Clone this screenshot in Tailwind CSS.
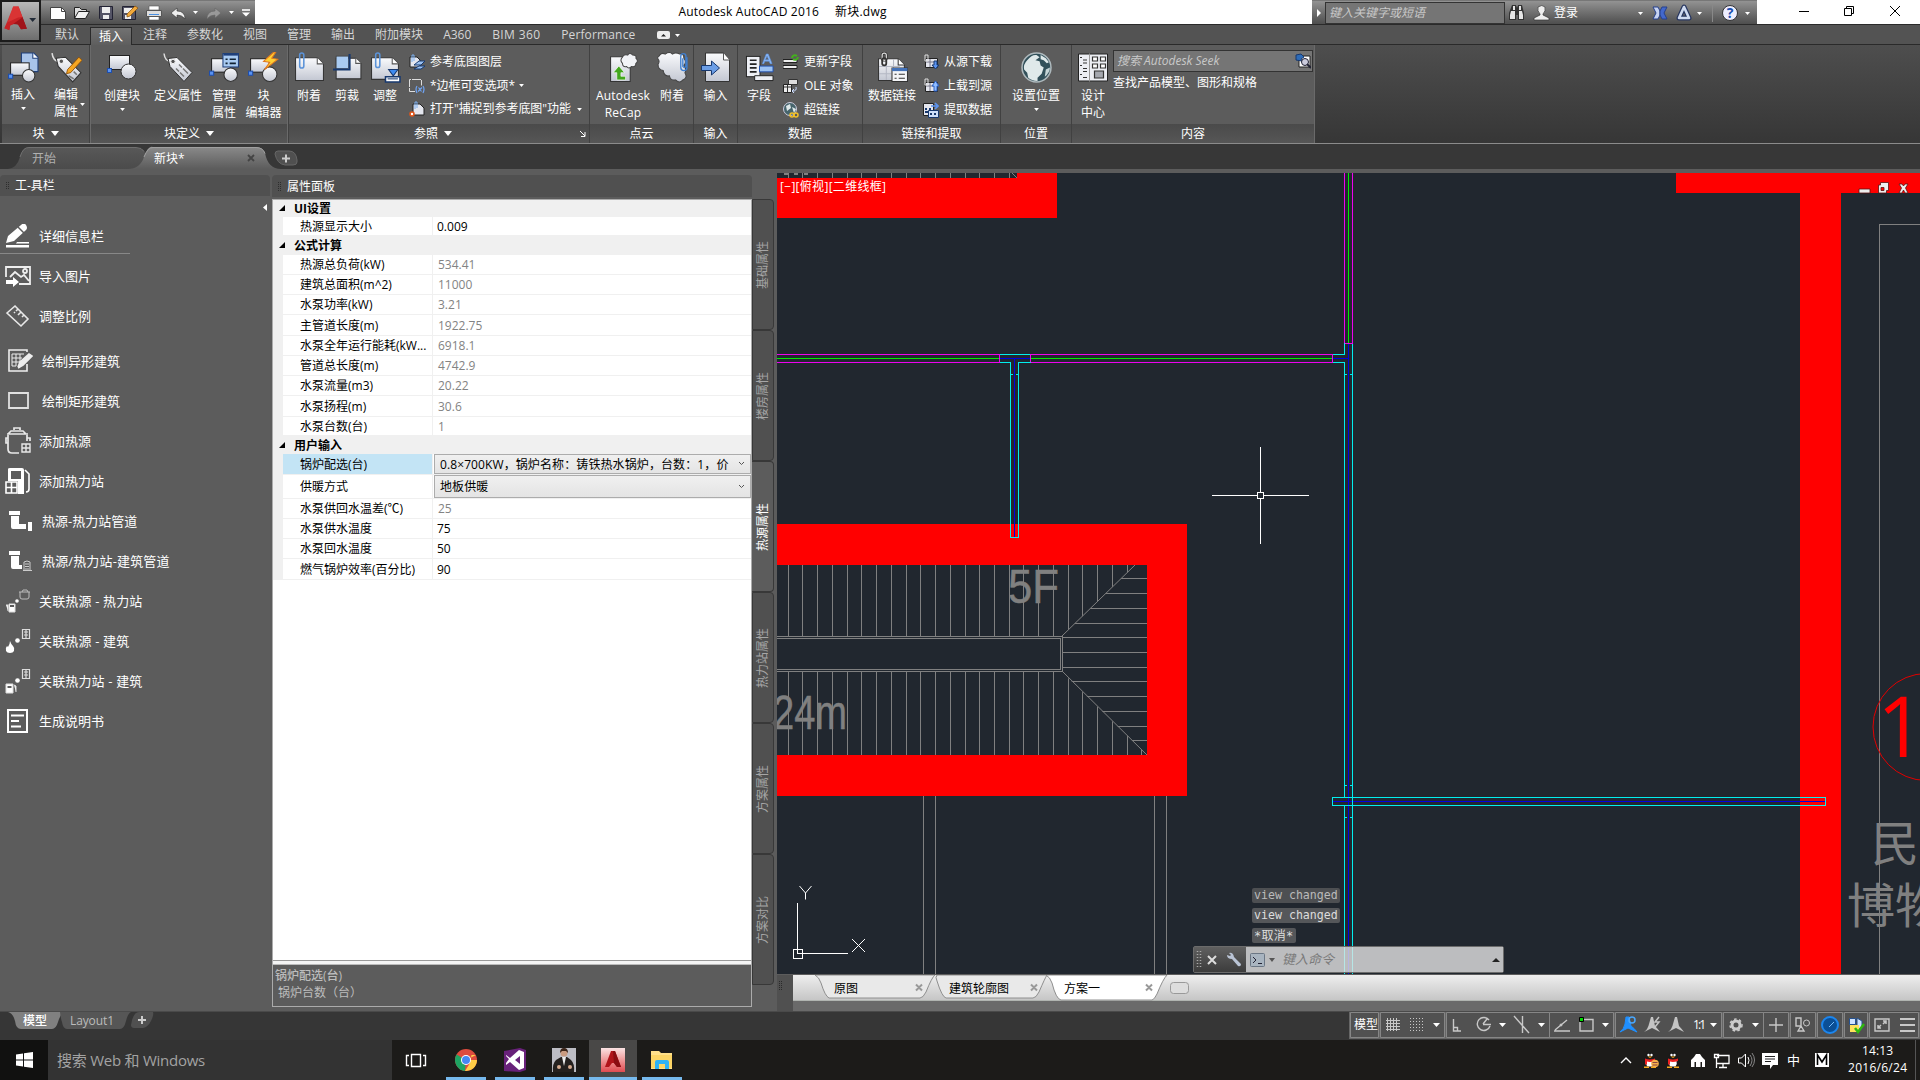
<!DOCTYPE html>
<html lang="zh-CN">
<head>
<meta charset="utf-8">
<title>Autodesk AutoCAD 2016</title>
<script src="https://cdn.jsdelivr.net/npm/@tailwindcss/browser@4"></script>
</head>
<body class="w-[1920px] h-[1080px] overflow-hidden bg-[#5c5c5c] font-['Open_Sans','Noto_Sans_CJK_SC',sans-serif] text-[12px] leading-none text-white flex flex-col whitespace-nowrap">
<svg class="absolute w-0 h-0">
 <defs>
  <linearGradient id="pg" x1="0" y1="0" x2="0" y2="1"><stop offset="0" stop-color="#fafbfd"/><stop offset="1" stop-color="#c3c7d2"/></linearGradient>
  <linearGradient id="red" x1="0" y1="0" x2="1" y2="1"><stop offset="0" stop-color="#f04a4a"/><stop offset="1" stop-color="#8e0c10"/></linearGradient>
 </defs>
 <symbol id="insert" viewBox="0 0 30 30"><path d="M13 1h12l4 4v14h-16z" fill="#a9c4ea" stroke="#1f3f7a"/><path d="M24 1v5h5" fill="#fff" stroke="#1f3f7a"/><rect x="2.500" y="10.500" width="18" height="12" fill="url(#pg)" stroke="#222"/><circle cx="20" cy="23" r="6" fill="url(#pg)" stroke="#333"/><rect x=".5" y="21.500" width="4" height="4" fill="#5b93f0" stroke="#1e4fae"/></symbol>
 <symbol id="create" viewBox="0 0 30 30"><rect x="2.500" y="3.500" width="20" height="14" fill="url(#pg)" stroke="#222"/><circle cx="21.500" cy="19.500" r="7.500" fill="url(#pg)" stroke="#333"/><rect x=".5" y="16.500" width="4" height="4" fill="#5b93f0" stroke="#1e4fae"/></symbol>
 <symbol id="tag" viewBox="0 0 30 30"><path d="M1 1q1 8 7 8" fill="none" stroke="#ddd" stroke-width="1.500"/><path d="M5 6l9-1 15 15-8 9L7 14z" fill="url(#pg)" stroke="#333"/><circle cx="10" cy="9" r="2.200" fill="#555" stroke="#eee"/><path d="M13 16l3 3M17 20l4 4M16 12l3 3M20 16l5 5" stroke="#777" stroke-width="1.500"/></symbol>
 <symbol id="tagedit" viewBox="0 0 30 30"><path d="M1 1q1 8 7 8" fill="none" stroke="#ddd" stroke-width="1.500"/><path d="M5 6l9-1 15 15-8 9L7 14z" fill="url(#pg)" stroke="#333"/><circle cx="10" cy="9" r="2.200" fill="#555" stroke="#eee"/><path d="M17 23l5 3M22 19l3 3" stroke="#777" stroke-width="1.500"/><path d="M27 5l3 3-11 12-4 1 1-4z" fill="#f5a623" stroke="#8a4a00" stroke-width=".8"/></symbol>
 <symbol id="manage" viewBox="0 0 30 30"><rect x="2.500" y="6.500" width="18" height="13" fill="url(#pg)" stroke="#222"/><circle cx="21" cy="22" r="6.500" fill="url(#pg)" stroke="#333"/><rect x=".5" y="18.500" width="4" height="4" fill="#5b93f0" stroke="#1e4fae"/><rect x="13.500" y="1.500" width="15" height="13" fill="#a9cbf2" stroke="#1f3f7a"/><path d="M14 2.500h14" stroke="#1f3f7a" stroke-width="2"/><path d="M16 7h2M16 11h2M20 7h6M20 11h6" stroke="#123" stroke-width="1.500"/></symbol>
 <symbol id="bedit" viewBox="0 0 30 30"><rect x="2.500" y="6.500" width="18" height="13" fill="url(#pg)" stroke="#222"/><circle cx="21" cy="21.500" r="7" fill="url(#pg)" stroke="#333"/><rect x=".5" y="18.500" width="4" height="4" fill="#5b93f0" stroke="#1e4fae"/><path d="M25 0L15 9l6 1-5 7 13-10-6-1 4-6z" fill="#ffcf33" stroke="#e0781e"/></symbol>
 <symbol id="attach" viewBox="0 0 30 30"><path d="M1.500 5.500h21l6 6v16h-27z" fill="url(#pg)" stroke="#333"/><path d="M22.500 5.500v6h6" fill="#fff" stroke="#555"/><path d="M9.500 5v8.500a2 2 0 01-4 0V3a2 2 0 014 0v2" fill="none" stroke="#5b93d8" stroke-width="1.500"/></symbol>
 <symbol id="clip" viewBox="0 0 30 30"><path d="M4 6h19l5 5v15H4z" fill="url(#pg)" stroke="#333"/><path d="M23 6v5h5" fill="#fff" stroke="#555"/><rect x="4" y="4" width="12" height="12" fill="#a9cbf2" stroke="#333" stroke-width=".6"/><path d="M17 2v15H1" fill="none" stroke="#17386e" stroke-width="2"/></symbol>
 <symbol id="adjust" viewBox="0 0 30 30"><path d="M1.500 5.500h20l6 6v15h-26z" fill="url(#pg)" stroke="#333"/><path d="M21.500 5.500v6h6" fill="#fff" stroke="#555"/><path d="M9.500 5v8a2 2 0 01-4 0V3a2 2 0 014 0v2" fill="none" stroke="#5b93d8" stroke-width="1.500"/><path d="M15 24v5h14v-5z" fill="#fff" stroke="#17386e" stroke-width="1.500"/><path d="M18 17h9l-4.500 6z" fill="#3d8bf2" stroke="#17386e"/><path d="M17 26h10" stroke="#17386e"/></symbol>
 <symbol id="recap" viewBox="0 0 30 30"><path d="M2.500 4.500h19v24h-19z" fill="url(#pg)" stroke="#333"/><path d="M14 5q1-3 5-2 2-3 5 0 4 0 3 3 3 3 0 5 0 4-4 3-3 3-5 0-4 1-4-3-3-3 0-6z" fill="#f2f3f7" stroke="#444"/><path d="M17 27H8.500v-7H5l5.500-6.500L16 20h-3.500v3.500H17z" fill="#43a71d" stroke="#fff" stroke-width=".6"/></symbol>
 <symbol id="cloud" viewBox="0 0 30 30"><path d="M2 4q2-4 6-2 4-3 7 0 3-2 7 0 4-1 4 4 3 4 0 7 3 4 1 7 3 5-2 7-3 4-7 0-5 1-6-4-5 1-6-5-5-1-5-6 2-3 0-5-1-2 1-3z" fill="url(#pg)" stroke="#444"/><path d="M29 5v10a3 3 0 01-6 0V4a2.500 2.500 0 015 0v10q-1.500 2-3 0V6" fill="none" stroke="#3f7fd0" stroke-width="1.300"/></symbol>
 <symbol id="import" viewBox="0 0 30 30"><path d="M4.500.5h18l6 7v21.500h-24z" fill="url(#pg)" stroke="#333"/><path d="M22.500.5v7h6" fill="#fff" stroke="#555"/><path d="M.5 13h10V8.500l8 7-8 7V18H.5z" fill="#6b9ee6" stroke="#17386e"/></symbol>
 <symbol id="field" viewBox="0 0 30 30"><rect x="1.500" y="3.500" width="14" height="21" fill="#eef0f5" stroke="#222"/><path d="M5 7.500h7M5 11.500h7M5 15.500h7M5 19.500h7" stroke="#222" stroke-width="1.800"/><path d="M18 11L22 1h2l4 10h-2l-1-2.500h-4.500l-1 2.500zM21 7h3.500l-1.700-4z" fill="#8db8f2" stroke="#5b93e8" stroke-width=".6"/><path d="M15 13.500h14v6H15z" fill="#9cc2f2" stroke="#1e4fae"/><path d="M10 23.500h19v5H10z" fill="#eef0f5" stroke="#222"/></symbol>
 <symbol id="dlink" viewBox="0 0 30 30"><path d="M1.500 6.500h19l6 6v15h-25z" fill="url(#pg)" stroke="#333"/><path d="M2 14h20M9 7v20M16 7v20M2 21h12" stroke="#b4b8c4"/><path d="M20.500 6.500v6h6" fill="#fff" stroke="#333"/><path d="M14.500 15.500h15v13h-15z" fill="#f4f5f8" stroke="#333"/><path d="M14.500 17h15" stroke="#4472b8" stroke-width="3"/><path d="M17 21.500h2M17 25.500h2M21 21.500h6M21 25.500h6" stroke="#333"/><rect x="5" y="1" width="4" height="7" rx="2" fill="none" stroke="#333" stroke-width="2.600"/><rect x="5" y="1" width="4" height="7" rx="2" fill="none" stroke="#ddd" stroke-width="1.200"/><rect x="5" y="6" width="4" height="7" rx="2" fill="none" stroke="#333" stroke-width="1.700"/></symbol>
 <symbol id="globe" viewBox="0 0 30 30"><circle cx="15" cy="15" r="14" fill="#31505a" stroke="#aeb9bd" stroke-width="1.500"/><path d="M6 8q5-6 9-5l3 2-4 3 4 1 1 4 3 2-2 6-4 4v3q-6 0-9-3l-1-5-3-3q-1-5 3-9z" fill="#dfe9ea"/><path d="M19 3l5 3 3 4-2 1-3-3-3-1z" fill="#dfe9ea"/><path d="M24 17l4-2q0 5-5 9z" fill="#c5d5d7"/></symbol>
 <symbol id="dc" viewBox="0 0 30 30"><path d="M.5 1.500h29v27H.5z" fill="#eceef3" stroke="#222"/><path d="M11.500 1v28" stroke="#999"/><path d="M2 5h2M5 7.500h4M5 10.500h4M2 13h2M5 16h4M5 19h4M2 22h2M5 25h4" stroke="#333"/><path d="M14.500 4.500h5v4h-5zM22.500 4.500h5v4h-5zM14.500 11.500h5v4h-5zM22.500 11.500h5v4h-5z" fill="#fff" stroke="#333" stroke-width="1.200"/><path d="M16.500 18.500h9v7h-9z" fill="#a4a7ae" stroke="#333" stroke-width="1.200"/></symbol>
 <symbol id="dn" viewBox="0 0 8 5"><path d="M0 0h8L4 5z" fill="currentColor"/></symbol>
</svg>

<!-- title bar -->
<header class="h-6 shrink-0 bg-white flex relative">
 <div class="w-[255px] bg-linear-to-b from-[#939393] to-[#4e4e4e] border-t border-[#777] flex items-center pl-[48px] relative">
  <div class="absolute z-10 left-0 -top-px w-[41px] h-[42px] bg-linear-to-b from-[#b8b8b8] to-[#6e6e6e] border-2 border-[#1c1c1c]">
   <svg class="w-full h-full" viewBox="0 0 38 38"><path d="M11.500 4h5.500l8.500 23-6 .5-3-5-3-1-5 2-1 5-5-2z" fill="url(#red)"/><path d="M17 4l4 11-15 6 5.500-17z" fill="#d93434"/><path d="M21 15l4.500 12-6 .5-3-5-10-1z" fill="#a0141a"/><path d="M2.500 26.500l3-6 11-5 5-.5-10 7-3 1-1 5z" fill="#c82226"/><path d="M28 16h7l-3.500 4z" fill="#222b38"/></svg>
  </div>
  <svg class="w-[206px] h-[22px]" viewBox="48 1 206 22"><path d="M50.500 6.500h11l4 4v8h-15z" fill="#fff" stroke="#444"/><path d="M61.500 6.500v4h4" fill="none" stroke="#444"/><path d="M74.500 17.500v-11h5l2 2h5v3" fill="#ddd" stroke="#222"/><path d="M74.500 17.500l4-7h11l-4 7z" fill="#f2f2f2" stroke="#222"/><path d="M99.500 5.500h13v13h-12l-1-1z" fill="#556" stroke="#223"/><path d="M102 6h8v6h-8zM103 14h6v4h-6z" fill="#eee"/><path d="M122.500 5.500h13v13h-13z" fill="#556" stroke="#223"/><path d="M124 7h8v5h-8zM125 14h6v4h-6z" fill="#eee"/><path d="M127 13l8-8 3 2-8 8-3 1z" fill="#f2a93c" stroke="#84500e" stroke-width=".7"/><path d="M149 5h10v4h-10zM149 14h10v5h-10z" fill="#fff" stroke="#555" stroke-width=".6"/><path d="M146.500 9.500h15v6h-15z" fill="#ddd" stroke="#555"/><path d="M149 13.500h10" stroke="#4a90e2"/><path d="M171 12l6-5v3q8 0 8 8-3-4-8-4v3z" fill="#eee" stroke="#333" stroke-width=".6"/><path d="M193 10h5l-2.500 3z" fill="#fff"/><path d="M221 12l-6-5v3q-8 0-8 8 3-4 8-4v3z" fill="#999" stroke="#666" stroke-width=".6"/><path d="M229 10h5l-2.500 3zM242 11.500h8l-4 4z" fill="#fff"/><path d="M242 9h8" stroke="#fff" stroke-width="1.600"/></svg>
 </div>
 <div class="flex-1 text-black flex items-center justify-center gap-[16px] pr-[2px] text-[12px]"><span class="tracking-[.2px]">Autodesk AutoCAD 2016</span><span class="tracking-[.2px]">新块.dwg</span></div>
 <div class="w-[445px] bg-linear-to-b from-[#939393] to-[#4e4e4e] border-t border-[#777] flex items-center">
  <svg class="w-[13px] h-[22px]" viewBox="0 0 13 22"><path d="M5 7v8l4-4z" fill="#fff"/></svg>
  <div class="w-[180px] h-[22px] bg-[#757575] border border-[#333] flex items-center pl-[3px] italic text-[#c9c9c9]">键入关键字或短语</div>
  <svg class="w-[49px] h-[22px]" viewBox="0 0 49 22"><path d="M7 3h4l1 3 1-3h4l2 8v7h-6v-5h-2v5H4v-7z" fill="#333"/><path d="M8 4h2v4H8zM14 4h2v4h-2zM6 9h4v8H5v-4zM14 9h3l1 4v4h-4z" fill="#e6e6e6"/><path d="M33 5q4-3 7 0 1 4-2 7v1l6 3v2H29v-2l6-3v-1q-3-3-2-7z" fill="#eee" stroke="#333" stroke-width=".7"/></svg>
  <span class="w-[83px]">登录</span>
  <svg class="w-[118px] h-[22px]" viewBox="0 0 118 22"><path d="M1 10h5l-2.500 3z" fill="#fff"/><path d="M16 5h5l2 4q0 2 0 4l-2 4h-5l3-6z" fill="#c7d3f2" stroke="#26408c"/><path d="M30 5h-5l-2 4v4l2 4h5l-3-6z" fill="#4368cc" stroke="#26408c"/><path d="M47 5l5 11H42z" fill="none" stroke="#26355f" stroke-width="5" stroke-linejoin="round"/><path d="M47 5l5 11H42z" fill="none" stroke="#cfdaf0" stroke-width="2.600" stroke-linejoin="round"/><path d="M60 10h5l-2.500 3z" fill="#fff"/><path d="M75.500 3v17" stroke="#888"/><circle cx="93" cy="11" r="7.500" fill="#eef" stroke="#333"/><text x="93" y="16" text-anchor="middle" font-size="14" font-weight="bold" fill="#1c4fb0">?</text><path d="M108 10h5l-2.500 3z" fill="#fff"/></svg>
 </div>
 <svg class="w-[163px] h-6" viewBox="0 0 163 24" fill="none" stroke="#000"><path d="M42 11.500h10M87.500 8.500h7v7h-7zM89.500 8v-1.500h7v7h-2M133 6l10 10M143 6l-10 10"/></svg>
</header>

<!-- ribbon tabs -->
<nav class="h-[21px] shrink-0 bg-[#535353] border-t border-b border-[#2a2a2a] flex items-center pl-[45px] text-[#d6d6d6]">
 <span class="px-[10px]">默认</span>
 <span class="px-2 mx-[1px] h-[18px] -mb-px flex items-center bg-linear-to-b from-[#727272] to-[#5e5e5e] border-x border-t border-[#2a2a2a] text-white mt-[2px]">插入</span>
 <span class="px-[10px]">注释</span><span class="px-[10px]">参数化</span><span class="px-[10px]">视图</span><span class="px-[10px]">管理</span><span class="px-[10px]">输出</span><span class="px-[10px]">附加模块</span>
 <span class="w-[49px] pl-[10px]">A360</span><span class="w-[69px] pl-[10px] tracking-[.4px]">BIM 360</span><span class="w-[105px] pl-[10px] tracking-[.15px]">Performance</span>
 <svg class="w-6 h-3" viewBox="0 0 24 12"><rect x="1" y="2" width="13" height="8" rx="2" fill="#eee"/><path d="M5 7.500h5L7.500 5z" fill="#222"/><path d="M19 5h5l-2.500 3z" fill="#fff"/></svg>
</nav>

<!-- ribbon -->
<section class="h-[99px] shrink-0 flex bg-linear-to-b from-[#4e4e4e] to-[#363636] border-b border-[#8b8b8b] pl-[2px]">
 <div class="w-[88px] border-r border-[#414141] bg-[#5c5c5c] flex flex-col">
  <div class="h-[79px] flex pt-[7px]">
   <div class="w-[42px] flex flex-col items-center"><svg class="w-[31px] h-[31px]"><use href="#insert"/></svg><span class="mt-[6px]">插入</span><svg class="w-[5px] h-[3px] mt-[6px]"><use href="#dn"/></svg></div>
   <div class="w-[44px] flex flex-col items-center relative"><svg class="w-[31px] h-[31px]"><use href="#tagedit"/></svg><span class="mt-[3px] text-center leading-[17px]">编辑<br>属性</span><svg class="w-[5px] h-[3px] absolute left-[36px] top-[51px]"><use href="#dn"/></svg></div>
  </div>
  <div class="h-[19px] bg-linear-to-b from-[#4a4a4a] to-[#565656] flex items-center justify-center gap-[6px]">块<svg class="w-2 h-[5px]"><use href="#dn"/></svg></div>
 </div>
 <div class="w-[198px] border-x border-[#6a6a6a] bg-[#5c5c5c] flex flex-col">
  <div class="h-[79px] flex pt-[7px] pl-[5px]">
   <div class="w-[52px] flex flex-col items-center"><svg class="w-[30px] h-[30px]"><use href="#create"/></svg><span class="mt-[8px]">创建块</span><svg class="w-[5px] h-[3px] mt-[6px]"><use href="#dn"/></svg></div>
   <div class="w-[60px] flex flex-col items-center"><svg class="w-[30px] h-[31px]"><use href="#tag"/></svg><span class="mt-[7px]">定义属性</span></div>
   <div class="w-[32px] flex flex-col items-center"><svg class="w-[31px] h-[31px]"><use href="#manage"/></svg><span class="mt-[4px] text-center leading-[17px]">管理<br>属性</span></div>
   <div class="w-[47px] flex flex-col items-center"><svg class="w-[31px] h-[31px]"><use href="#bedit"/></svg><span class="mt-[4px] text-center leading-[17px]">块<br>编辑器</span></div>
  </div>
  <div class="h-[19px] bg-linear-to-b from-[#4a4a4a] to-[#565656] flex items-center justify-center gap-[6px]">块定义<svg class="w-2 h-[5px]"><use href="#dn"/></svg></div>
 </div>
 <div class="w-[302px] border-x border-[#414141] bg-[#5c5c5c] flex flex-col">
  <div class="h-[79px] flex pt-[7px] pl-px">
   <div class="w-[38px] flex flex-col items-center"><svg class="w-[31px] h-[31px]"><use href="#attach"/></svg><span class="mt-[7px]">附着</span></div>
   <div class="w-[38px] flex flex-col items-center"><svg class="w-[31px] h-[31px]"><use href="#clip"/></svg><span class="mt-[7px]">剪裁</span></div>
   <div class="w-[38px] flex flex-col items-center"><svg class="w-[31px] h-[31px]"><use href="#adjust"/></svg><span class="mt-[7px]">调整</span></div>
   <div class="flex flex-col pl-[5px] -mt-[2px]">
    <div class="h-6 flex items-center gap-[5px]"><svg class="w-4 h-4" viewBox="0 0 16 16"><path d="M1 3h7l3 3v7H1z" fill="#e4e6ee" stroke="#222"/><path d="M5 11l5-4h6l-4 4zM5 15l5-3h6l-4 3z" fill="#9cc2f2" stroke="#17386e"/><path d="M3 8V1h2v6" fill="none" stroke="#7db0f0"/></svg>参考底图图层</div>
    <div class="h-[23px] flex items-center gap-[5px]"><svg class="w-4 h-4 overflow-visible" viewBox="0 0 16 16"><path d="M6 13.500H.5v-12h12v6" fill="none" stroke="#ddd" stroke-dasharray="9 1"/><path d="M8 8q-2 3 0 7M14 8q2 3 0 7M9.500 9.500l3 4M13 9.500l-4 4" fill="none" stroke="#6fa4f4" stroke-width="1.200"/></svg>*边框可变选项*<svg class="w-[5px] h-[3px] -ml-px"><use href="#dn"/></svg></div>
    <div class="h-6 flex items-center gap-[5px]"><svg class="w-4 h-4" viewBox="0 0 16 16"><path d="M4 3h7l4 4v7H4z" fill="#e4e6ee" stroke="#222"/><path d="M6 8V1h2v6" fill="none" stroke="#7db0f0"/><circle cx="3" cy="13" r="2" fill="#fff" stroke="#e0551a" stroke-width="1.600"/></svg><span class="tracking-[-.05px]">打开"捕捉到参考底图"功能</span><svg class="w-[5px] h-[3px] ml-px"><use href="#dn"/></svg></div>
   </div>
  </div>
  <div class="h-[19px] bg-linear-to-b from-[#4a4a4a] to-[#565656] flex items-center"><span class="pl-[125px]">参照</span><svg class="w-2 h-[5px] ml-[6px]"><use href="#dn"/></svg><svg class="w-[6px] h-[6px] ml-auto mr-[3px]" viewBox="0 0 6 6"><path d="M0 0l5 5M5 1v4.500H1" stroke="#fff" fill="none"/></svg></div>
 </div>
 <div class="w-[104px] border-r border-[#414141] bg-[#5c5c5c] flex flex-col">
  <div class="h-[79px] flex pt-[7px] pl-[3px]">
   <div class="w-[60px] flex flex-col items-center"><svg class="w-[31px] h-[31px]"><use href="#recap"/></svg><span class="mt-[4px] text-center leading-[17px] tracking-[.2px]">Autodesk<br>ReCap</span></div>
   <div class="w-[38px] flex flex-col items-center"><svg class="w-[31px] h-[31px]"><use href="#cloud"/></svg><span class="mt-[7px]">附着</span></div>
  </div>
  <div class="h-[19px] bg-linear-to-b from-[#4a4a4a] to-[#565656] flex items-center justify-center">点云</div>
 </div>
 <div class="w-[44px] border-r border-[#414141] bg-[#5c5c5c] flex flex-col">
  <div class="h-[79px] flex pt-[7px] justify-center"><div class="flex flex-col items-center"><svg class="w-[30px] h-[31px]"><use href="#import"/></svg><span class="mt-[7px]">输入</span></div></div>
  <div class="h-[19px] bg-linear-to-b from-[#4a4a4a] to-[#565656] flex items-center justify-center">输入</div>
 </div>
 <div class="w-[125px] border-r border-[#414141] bg-[#5c5c5c] flex flex-col">
  <div class="h-[79px] flex pt-[7px]">
   <div class="w-[42px] flex flex-col items-center"><svg class="w-[29px] h-[31px]"><use href="#field"/></svg><span class="mt-[7px]">字段</span></div>
   <div class="flex flex-col pl-[3px] -mt-[2px]">
    <div class="h-6 flex items-center gap-[5px]"><svg class="w-4 h-4" viewBox="0 0 16 16"><path d="M0 5.500h14v3H0zM0 11.500h14v3H0z" fill="#eee" stroke="#222"/><path d="M9 4a3 3 0 015-2M15 3a3 3 0 01-5 2" stroke="#43b01d" stroke-width="2" fill="none"/></svg>更新字段</div>
    <div class="h-6 flex items-center gap-[5px]"><svg class="w-4 h-4" viewBox="0 0 16 16"><path d="M5.500 1.500h9v5h-9z" fill="#ddd" stroke="#333"/><path d="M.5 6.500h8v8h-8z" fill="#eee" stroke="#222"/><path d="M1 9h8M4.500 7v7" stroke="#333"/><path d="M13 9q1 4-3 4M11 11l-2 2 2 2" fill="none" stroke="#cdf"/></svg>OLE 对象</div>
    <div class="h-6 flex items-center gap-[5px]"><svg class="w-4 h-4" viewBox="0 0 16 16"><circle cx="7" cy="7" r="6.500" fill="#46646c" stroke="#ccd"/><path d="M3 4l4-2 1 4-4 3zM9 5l4 2-2 4z" fill="#dfe9ea"/><circle cx="9" cy="13" r="2" fill="none" stroke="#f2c029" stroke-width="1.500"/><circle cx="13" cy="13" r="2" fill="none" stroke="#f2c029" stroke-width="1.500"/></svg>超链接</div>
   </div>
  </div>
  <div class="h-[19px] bg-linear-to-b from-[#4a4a4a] to-[#565656] flex items-center justify-center">数据</div>
 </div>
 <div class="w-[138px] border-r border-[#414141] bg-[#5c5c5c] flex flex-col">
  <div class="h-[79px] flex pt-[7px] pl-px">
   <div class="w-[56px] flex flex-col items-center"><svg class="w-[31px] h-[31px]"><use href="#dlink"/></svg><span class="mt-[7px]">数据链接</span></div>
   <div class="flex flex-col pl-[3px] -mt-[2px]">
    <div class="h-6 flex items-center gap-[5px]"><svg class="w-4 h-4" viewBox="0 0 16 16"><path d="M2.500 4.500h12v9h-12z" fill="#e4e6ee" stroke="#222"/><path d="M3 8h11M7 5v8" stroke="#778"/><path d="M2 1h3v6H2z" fill="none" stroke="#ddd"/><path d="M11 7h3v4h2l-3.500 4L9 11h2z" fill="#5b93f0" stroke="#17386e"/></svg>从源下载</div>
    <div class="h-6 flex items-center gap-[5px]"><svg class="w-4 h-4" viewBox="0 0 16 16"><path d="M2.500 4.500h12v9h-12z" fill="#e4e6ee" stroke="#222"/><path d="M3 8h11M7 5v8" stroke="#778"/><path d="M2 1h3v6H2z" fill="none" stroke="#ddd"/><path d="M11 13h3V8h2l-3.500-5L9 8h2z" fill="#8fbcff" stroke="#2a62c8"/></svg>上载到源</div>
    <div class="h-6 flex items-center gap-[5px]"><svg class="w-4 h-4" viewBox="0 0 16 16"><path d="M.5 1.500h10v12H.5z" fill="#e4e6ee" stroke="#222"/><path d="M2 7h2M6 7h2M2 10h3" stroke="#17386e" stroke-width="2"/><path d="M5.500 8.500h10v7h-10z" fill="#cfe0fa" stroke="#17386e"/><path d="M7 12h2M11 12h2" stroke="#17386e" stroke-width="2"/><path d="M8 4h7M12 1l3 3-3 3" stroke="#5b93f0" fill="none" stroke-width="1.700"/></svg>提取数据</div>
   </div>
  </div>
  <div class="h-[19px] bg-linear-to-b from-[#4a4a4a] to-[#565656] flex items-center justify-center">链接和提取</div>
 </div>
 <div class="w-[71px] border-r border-[#414141] bg-[#5c5c5c] flex flex-col">
  <div class="h-[79px] flex flex-col items-center pt-[7px]"><svg class="w-[31px] h-[31px]"><use href="#globe"/></svg><span class="mt-[7px]">设置位置</span><svg class="w-[5px] h-[3px] mt-[6px]"><use href="#dn"/></svg></div>
  <div class="h-[19px] bg-linear-to-b from-[#4a4a4a] to-[#565656] flex items-center justify-center">位置</div>
 </div>
 <div class="w-[243px] border-r border-[#6a6a6a] bg-[#5c5c5c] flex flex-col">
  <div class="h-[79px] flex pt-[5px] pl-[2px]">
   <div class="w-[38px] flex flex-col items-center pt-[2px]"><svg class="w-[30px] h-[31px]"><use href="#dc"/></svg><span class="mt-[4px] text-center leading-[17px]">设计<br>中心</span></div>
   <div class="flex flex-col pl-px"><div class="w-[200px] h-[22px] bg-[#757575] border border-[#333] flex items-center pl-[3px] pr-px justify-between italic text-[#c9c9c9]">搜索 Autodesk Seek<svg class="w-4 h-[18px]" viewBox="0 0 16 18"><path d="M4 4h11v11H4z" fill="#fff" stroke="#222"/><path d="M1 3l5-1 3 3-3 2 1 2-6-1z" fill="#2e6cb8" stroke="#17386e"/><circle cx="10" cy="10" r="3.500" fill="#ccd" stroke="#223"/><path d="M12 12l4 4" stroke="#223" stroke-width="2"/></svg></div><span class="mt-[5px]">查找产品模型、图形和规格</span></div>
  </div>
  <div class="h-[19px] bg-linear-to-b from-[#4a4a4a] to-[#565656] flex items-center justify-center">内容</div>
 </div>
</section>

<!-- file tabs -->
<div class="h-[25px] shrink-0 bg-[#373737]">
 <svg class="w-[320px] h-[25px]" viewBox="0 0 320 25"><defs><linearGradient id="ft" x1="0" y1="0" x2="0" y2="1"><stop offset="0" stop-color="#8a8a8a"/><stop offset="1" stop-color="#5c5c5c"/></linearGradient><linearGradient id="fi" x1="0" y1="0" x2="0" y2="1"><stop offset="0" stop-color="#585858"/><stop offset="1" stop-color="#4b4b4b"/></linearGradient></defs>
 <path d="M8 25q9-1 12-12t9-9h107q8 0 9 5l8 16z" fill="url(#fi)"/><path d="M20 13q3-10 9-9.500h107q6 0 8 4" fill="none" stroke="#707070"/>
 <path d="M128 25q12 0 16-12t9-10h103q7 0 9 6 3 16 16 16z" fill="url(#ft)"/><path d="M144 13q4-10 9-9.500h103q7 0 9 6" fill="none" stroke="#a0a0a0"/>
 <path d="M275 10q0-3 3-3h11q7 0 8 9v2q0 3-4 3h-8q-8-1-10-11z" fill="#505050" stroke="#666"/><path d="M286 10.500v8M282 14.500h8" stroke="#ccc" stroke-width="2"/>
 <text x="32" y="19" font-size="12" fill="#b0b0b0">开始</text><text x="154" y="19" font-size="12" fill="#fff">新块*</text><path d="M248 11l6 6M254 11l-6 6" stroke="#444" stroke-width="1.800"/></svg>
</div>

<!-- workspace -->
<main class="h-[843px] shrink-0 flex border-b border-[#4a4a4a]">
 <!-- tool palette -->
 <aside class="w-[272px] pt-[6px] flex flex-col">
  <div class="w-[270px] h-[21px] bg-[#505050] rounded-t-[4px] flex items-center pt-px"><svg class="w-[15px] h-4" viewBox="0 0 15 16"><path d="M6.500 4v8M8.500 4v8" stroke="#2e2e2e" stroke-dasharray="1 1"/></svg><span>工-具栏</span></div>
  <div class="h-[23px] flex items-center justify-end pr-[5px] pb-px"><svg class="w-1 h-[7px]" viewBox="0 0 4 7"><path d="M4 0v7L0 3.500z" fill="#fff"/></svg></div>
  <ul class="text-[13px] flex flex-col -mt-[3px]">
   <li class="h-[38px] w-[130px] flex items-center gap-[8px] pl-[5px] border-b border-[#888] pt-[4px]"><svg class="w-[26px] h-[26px]" viewBox="0 0 26 26"><path d="M1 19l2-7L16 1q3-3 5 0t0 5L9 17zM1 21h23v2.500H1zM12 18h12v1.500H11z" fill="#fff"/><path d="M13 3l6 6" stroke="#5c5c5c" stroke-width="1.500"/></svg>详细信息栏</li>
   <li class="h-10 flex items-center gap-[8px] pl-[5px] mt-[2px]"><svg class="w-[26px] h-[22px]" viewBox="0 0 26 22" fill="none" stroke="#eee" stroke-width="1.800"><path d="M1 12V2h24v17H14M5 12l5-5 6 5 3-2 5 6"/><circle cx="20" cy="6" r="2"/><path d="M1 15h7v-3l6 5-6 5v-3H1z" fill="#fff" stroke="none"/></svg>导入图片</li>
   <li class="h-10 flex items-center gap-[8px] pl-[5px]"><svg class="w-[26px] h-[24px]" viewBox="0 0 26 24" fill="none" stroke="#e8e8e8" stroke-width="1.600"><path d="M2 9l8-7 13 13-7 7zM13 5l-2 2M16 8l-3 3M19 11l-2 2M10 8l-1 1"/></svg>调整比例</li>
   <li class="h-10 flex items-center gap-[9px] pl-[7px] mt-[5px]"><svg class="w-[26px] h-[24px]" viewBox="0 0 26 24" fill="none" stroke="#eee" stroke-width="1.600"><path d="M20 3V1H2v21h18v-7"/><path d="M5 5h12M5 9h10M5 13h8M5 17h4M5 5v12M9 5v12M13 5v8" stroke-width="1"/><path d="M11 18l2-5 9-8 3 2-9 9-5 3" fill="#eee"/></svg>绘制异形建筑</li>
   <li class="h-10 flex items-center gap-[9px] pl-[7px]"><svg class="w-[26px] h-[20px]" viewBox="0 0 26 20"><path d="M2 2h19v15H2z" fill="none" stroke="#e0e0e0" stroke-width="1.800"/></svg>绘制矩形建筑</li>
   <li class="h-10 flex items-center gap-[8px] pl-[5px]"><svg class="w-[26px] h-[28px]" viewBox="0 0 26 28" fill="none" stroke="#e8e8e8" stroke-width="1.700"><path d="M2 7h21M3 7l3-3h12l3 3M9 3V1h6v2M3 8v14q0 4 4 4h7M22 8v6M3 11H1v5h2M22 11h3v3"/><path d="M17 17h8v8h-8zM21 17v8M17 21h8" stroke-width="1.400"/></svg>添加热源</li>
   <li class="h-10 flex items-center gap-[8px] pl-[5px]"><svg class="w-[26px] h-[28px]" viewBox="0 0 26 28"><path d="M3 14V2q0-1 2-1h12q2 0 2 2v24h-6V14zM6 4v8h10V4z" fill="#fff" fill-rule="evenodd"/><path d="M20 3l4 4v15q0 3-3 3M1 15h11v11H1zM6.500 15v11M1 20.500h11" fill="none" stroke="#fff" stroke-width="1.600"/></svg>添加热力站</li>
   <li class="h-10 flex items-center gap-[9px] pl-[7px]"><svg class="w-[26px] h-[22px]" viewBox="0 0 26 22" fill="#fff"><path d="M2 1h11v4H2zM4 6h8v8h7v5H6q-2 0-2-2zM21 12h4v9h-4z"/></svg>热源-热力站管道</li>
   <li class="h-10 flex items-center gap-[9px] pl-[7px]"><svg class="w-[26px] h-[22px]" viewBox="0 0 26 22"><path d="M2 1h11v4H2zM4 6h8v9h3v4H6q-2 0-2-2z" fill="#fff"/><path d="M17 20V12q3-2 6 0v8M16 20.500h9M18 14h4M18 16.500h4M18 19h4" fill="none" stroke="#ccc"/></svg><span class="tracking-[.15px]">热源/热力站-建筑管道</span></li>
   <li class="h-10 flex items-center gap-[8px] pl-[5px]"><svg class="w-[26px] h-[26px]" viewBox="0 0 26 26"><path d="M1 17h2v6M4 24V16h6v8zM10 18" fill="#fff" stroke="#ddd"/><rect x="5" y="17" width="4" height="2" fill="#5c5c5c"/><circle cx="12" cy="13" r="1.800" fill="#fff"/><path d="M14 4h11M15 4v5q0 2 2 2h5q2 0 2-2V4M17 4l1-2h4l1 2" fill="none" stroke="#bbb"/></svg><span class="tracking-[.15px]">关联热源 - 热力站</span></li>
   <li class="h-10 flex items-center gap-[8px] pl-[5px]"><svg class="w-[26px] h-[26px]" viewBox="0 0 26 26"><path d="M5 13q1 3 3 5t1 5q-1 2-4 2t-4-2q-1-3 1-5l1 1q2-3 2-6z" fill="#fff"/><circle cx="12.500" cy="12.500" r="2.300" fill="#fff"/><path d="M17.500 1.500h7v9h-7zM19 4h4M19 7h4M21 2v8" fill="none" stroke="#ddd" stroke-width="1.200"/></svg><span class="tracking-[.15px]">关联热源 - 建筑</span></li>
   <li class="h-10 flex items-center gap-[8px] pl-[5px]"><svg class="w-[26px] h-[26px]" viewBox="0 0 26 26"><path d="M1 25V16h7v9zM9 17l2 1v6" fill="#fff" stroke="#ddd"/><rect x="2.500" y="18" width="4" height="2" fill="#5c5c5c"/><circle cx="12.500" cy="12.500" r="2.300" fill="#fff"/><path d="M17.500 1.500h7v9h-7zM19 4h4M19 7h4M21 2v8" fill="none" stroke="#ddd" stroke-width="1.200"/></svg><span class="tracking-[.15px]">关联热力站 - 建筑</span></li>
   <li class="h-10 flex items-center gap-[8px] pl-[5px]"><svg class="w-[26px] h-[26px]" viewBox="0 0 26 26" fill="none" stroke="#fff" stroke-width="2"><path d="M3 2h19v22H3zM6 7.500h13M6 13h8M6 18.500h10"/></svg>生成说明书</li>
  </ul>
 </aside>

 <!-- property panel -->
 <section class="w-[480px] pt-[6px] flex flex-col">
  <div class="h-[22px] bg-[#505050] rounded-t-[4px] flex items-center pt-px"><svg class="w-[15px] h-4" viewBox="0 0 15 16"><path d="M6.500 3v9M8.500 3v9" stroke="#2e2e2e" stroke-dasharray="1 1"/></svg><span>属性面板</span></div>
  <div class="mt-[2px] h-[808px] border border-[#ababab] flex flex-col">
   <div class="h-[760px] bg-white text-black" id="grid"></div>
   <div class="h-[3px] bg-[#f4f4f4] border-t border-[#999] box-content"></div>
   <div class="flex-1 border-t border-[#bbb] bg-[#5c5c5c] text-[#bdbdbd] px-[2px] pt-[2px]"><div class="font-medium leading-[17px]">锅炉配选(台)</div><div class="pl-[3px] leading-[17px] font-['Open_Sans','Noto_Sans_CJK_TC',sans-serif]">锅炉台数（台）</div></div>
  </div>
 </section>
 <nav class="w-[25px] pt-[30px] pr-[3px] flex flex-col text-[#a6a6a6]">
  <div class="h-[131px] bg-[#505050] border border-[#383838] rounded-r-[4px] flex items-center justify-center"><span class="-rotate-90">基础属性</span></div>
  <div class="h-[131px] bg-[#505050] border border-[#383838] rounded-r-[4px] flex items-center justify-center"><span class="-rotate-90">楼房属性</span></div>
  <div class="h-[131px] bg-[#5c5c5c] border border-l-0 border-[#383838] rounded-r-[4px] flex items-center justify-center text-white"><span class="-rotate-90">热源属性</span></div>
  <div class="h-[131px] bg-[#505050] border border-[#383838] rounded-r-[4px] flex items-center justify-center"><span class="-rotate-90">热力站属性</span></div>
  <div class="h-[131px] bg-[#505050] border border-[#383838] rounded-r-[4px] flex items-center justify-center"><span class="-rotate-90">方案属性</span></div>
  <div class="h-[131px] bg-[#505050] border border-[#383838] rounded-r-[4px] flex items-center justify-center"><span class="-rotate-90">方案对比</span></div>
 </nav>

 <!-- drawing area -->
 <section class="w-[1143px] pt-[4px] flex flex-col relative">
  <svg class="w-[1143px] h-[801px] shrink-0" viewBox="777 173 1143 801">
   <defs>
    <clipPath id="hu"><path d="M777 565H1135L1062 636H777z"/></clipPath>
    <clipPath id="hl"><path d="M777 672H1062L1147 755H777z"/></clipPath>
    <clipPath id="hr"><path d="M1147 565H1135L1062 636V672L1147 755z"/></clipPath>
   </defs>
   <rect x="777" y="173" width="1143" height="801" fill="#21272f"/>
   <g shape-rendering="crispEdges" fill="none" stroke="#808080">
    <path d="M788.500 173v5M802.500 173v5M817.500 173v5M832.500 173v5M847.500 173v5M861.500 173v5M876.500 173v5M891.500 173v5M906.500 173v5M920.500 173v5M935.500 173v5M950.500 173v5M965.500 173v5M979.500 173v5M994.500 173v5M1009.500 173v5M1012 173l5 5"/>
    <path d="M784 173.500h4M794 173.500h4M804 173.500h4" stroke-width="2"/>
    <path clip-path="url(#hu)" d="M788.500 565v71M802.500 565v71M817.500 565v71M832.500 565v71M847.500 565v71M861.500 565v71M876.500 565v71M891.500 565v71M906.500 565v71M920.500 565v71M935.500 565v71M950.500 565v71M965.500 565v71M979.500 565v71M994.500 565v71M1009.500 565v71M1023.500 565v71M1038.500 565v71M1053.500 565v71M1068.500 565v71M1082.500 565v71M1097.500 565v71M1112.500 565v71M1127.500 565v71"/>
    <path clip-path="url(#hl)" d="M788.500 672v83M802.500 672v83M817.500 672v83M832.500 672v83M847.500 672v83M861.500 672v83M876.500 672v83M891.500 672v83M906.500 672v83M920.500 672v83M935.500 672v83M950.500 672v83M965.500 672v83M979.500 672v83M994.500 672v83M1009.500 672v83M1023.500 672v83M1038.500 672v83M1053.500 672v83M1068.500 672v83M1082.500 672v83M1097.500 672v83M1112.500 672v83M1127.500 672v83M1141.500 672v83"/>
    <path clip-path="url(#hr)" d="M1062 578.500h85M1062 593.500h85M1062 608.500h85M1062 623.500h85M1062 637.500h85M1062 652.500h85M1062 667.500h85M1062 681.500h85M1062 696.500h85M1062 711.500h85M1062 726.500h85M1062 740.500h85"/>
    <path d="M777 636.500H1062.500V671.500H777M777 638.500H1060.500V669.500H777M923.500 796v178M935.500 796v178M1154.500 796v178M1166.500 796v178M1920 224.500H1879.500V974"/>
   </g>
   <path d="M1062 636l73-71M1062 671l85 84" stroke="#808080" fill="none"/>
   <g fill="#808080" stroke="#808080" stroke-width=".5" font-family="Liberation Sans">
    <text x="1008" y="602.500" font-size="48" textLength="51" lengthAdjust="spacingAndGlyphs">5F</text>
    <text x="773" y="729" font-size="48" textLength="74" lengthAdjust="spacingAndGlyphs">24m</text>
   </g>
   <path fill="#f00" fill-rule="evenodd" d="M777 178H1017V173H1057V218H777zM1676 173H1920V193H1841V974H1800V193H1676zM777 524H1187V796H777V755H1147V565H777z"/>
   <g shape-rendering="crispEdges" fill="none">
    <path stroke="#0f0" stroke-opacity=".9" d="M1348.500 173v170M777 358.500h223M1030 358.500h302"/>
    <path stroke="#0000e0" d="M1000 358.500h30M1014.500 359v178M1332 358.500h16M1348.500 343v631M1332 801.500h493"/>
    <path stroke="#f0f" stroke-opacity=".92" d="M1344.500 173v170M1352.500 173v170M1344 343.500h9M777 354.500h222.500v8H777M1332.500 354.500H1030.500v8h302z"/>
    <path stroke="#0ff" stroke-opacity=".92" d="M1000 354.500h30M1000 362.500h10.500V537.500h8V362.500h12M1010 374.500h3M1016 374.500h3M1333 354.500h11.500V343M1333 362.500h11.500V797.500M1352.500 344V974M1344 374.500h3M1350 374.500h3M1344 785.500h3M1350 785.500h3M1344 817.500h3M1350 817.500h3M1332.500 797.500H1825.500V805.500H1332.500zM1344.500 805V974"/>
    <path stroke="#fff" d="M1212 495.500h45M1264 495.500h45M1260.500 447v45M1260.500 499v45M1257.500 492.500h6v6h-6zM797.500 903v50.500H848M793.500 949.500h9v9h-9z"/>
   </g>
   <path d="M799.500 886l6 7 6-7M805.500 893v6.500M852 939l13 13M865 939l-13 13" fill="none" stroke="#fff"/>
   <ellipse cx="1926.500" cy="727" rx="53.500" ry="53.500" fill="none" stroke="#e00000"/>
   <text x="1877" y="757" font-size="84" fill="#f00" font-family="Open Sans">1</text>
   <g fill="#808080" font-size="48" font-family="Noto Sans CJK SC"><text x="1871" y="861">民</text><text x="1847" y="922.500">博物</text></g>
   <text x="780" y="191" font-size="12" fill="#fff" textLength="106">[−][俯视][二维线框]</text>
   <g stroke="#5c1010" stroke-width=".8" fill="#eee"><path d="M1859 189h11v4h-11z"/><path fill-rule="evenodd" d="M1878.500 185h2v-2.500h8v8h-2v2.500h-8zM1881 187.500v3h3v-3z"/><path d="M1899 184h3l1.500 2 1.500-2h3l-2.500 4 2.500 5h-3l-1.500-3-1.500 3h-3l2.500-5z"/></g>
  </svg>
  <div class="absolute left-[475px] top-[719px] flex flex-col items-start gap-[5px] font-['DejaVu_Sans_Mono','Noto_Sans_CJK_SC',monospace] text-[11.600px] text-[#ddd]">
   <span class="h-[15px] w-[88px] px-[2px] pt-px bg-[#4d4f52] rounded-[2px] flex items-center text-[#bbb]">view changed</span>
   <span class="h-[15px] w-[88px] px-[2px] pt-px bg-[#55575a] rounded-[2px] flex items-center">view changed</span>
   <span class="h-[15px] w-[44px] px-[2px] bg-[#55575a] rounded-[2px] flex items-center text-[12px] tracking-[.3px]">*取消*</span>
  </div>
  <div class="absolute left-[416px] top-[777px] w-[311px] h-[27px] flex border border-[#6b6b6b] rounded-[2px]">
   <svg class="w-[52px] h-[25px] bg-linear-to-b from-[#606060] to-[#3c3c3c]" viewBox="0 0 52 25"><path d="M3.500 4v17M6.500 4v17" stroke="#aaa" stroke-dasharray="1 2" stroke-width="1.500"/><path d="M14 9l8 8M22 9l-8 8" stroke="#ddd" stroke-width="2"/><path d="M35 6q4-1 5 4l7 7q0 3-3 2l-6-7q-5 0-5-4l3 1 1-1z" fill="#b9c3d4"/></svg>
   <div class="flex-1 bg-[#e4e4e4]/80 flex items-center pl-1"><svg class="w-[25px] h-4" viewBox="0 0 25 16"><rect x=".5" y="1.500" width="14" height="13" rx="1" fill="#a8b4c0" stroke="#6b7785"/><path d="M3 5l3 3-3 3M8 11.500h4" stroke="#223" fill="none"/><path d="M19 6h6l-3 4z" fill="#555"/></svg><span class="italic text-[#7a7a7a] pl-[7px] text-[13px]">键入命令</span><svg class="w-2 h-1 ml-auto mr-[3px]" viewBox="0 0 8 4"><path d="M0 4h8L4 0z" fill="#222"/></svg></div>
  </div>
  <div class="h-[2px] bg-[#5c5c5c]"></div>
  <div class="flex h-[36px] bg-[#6a6a6a]">
   <svg class="w-4 h-full bg-[#505050]" viewBox="0 0 16 36"><path d="M2.500 6v9M4.500 6v9" stroke="#2a2a2a" stroke-dasharray="1 1"/></svg>
   <svg class="w-[1127px] h-[26px]" viewBox="793 976 1127 26"><defs><linearGradient id="lb" x1="0" y1="0" x2="0" y2="1"><stop offset="0" stop-color="#eee"/><stop offset="1" stop-color="#c6c6c6"/></linearGradient></defs>
    <rect x="793" y="976" width="1127" height="25" fill="url(#lb)"/><path d="M793 1001.500h1127" stroke="#b0b4b0"/>
    <g fill="#e9e9e9" stroke="#8e8e8e"><path d="M815 976q4 2 6 8 4 13 8 15h91q3 0 6-6 6-15 9-17z"/><path d="M937 976q-2 2 0 6 5 16 9 17h87q3 0 6-6 6-14 8-17z"/><path d="M1046 976q4 2 6 8 4 16 9 17h91q2 0 5-6 6-15 10-19z" fill="#fff"/></g>
    <rect x="1170.500" y="983.500" width="18" height="11" rx="3" fill="#ddd" stroke="#999"/>
    <g font-size="12" fill="#000"><text x="834" y="993.500">原图</text><text x="949" y="993.500">建筑轮廓图</text><text x="1064" y="993.500">方案一</text></g>
    <path d="M916 985.500l6 6M922 985.500l-6 6M1031 985.500l6 6M1037 985.500l-6 6M1146 985.500l6 6M1152 985.500l-6 6" stroke="#999" stroke-width="2"/></svg>
  </div>
 </section>
</main>

<!-- status bar -->
<footer class="h-7 shrink-0 bg-[#363636] flex justify-between">
 <svg class="w-[180px] h-5" viewBox="0 1012 180 20"><path d="M8 1012q5 1 7 9 1 8 6 8h31q4 0 6-7t6-10z" fill="#808080"/><path d="M60 1012q1 8 2 10 1 7 5 7h53q4 0 6-8t5-9z" fill="#565656"/><path d="M131 1025q2-13 8-13h14q1 3-2 9t-8 7h-9q-3 0-3-3z" fill="#505050"/><text x="23" y="1024.500" font-size="12" font-weight="500" fill="#fff">模型</text><text x="70" y="1024.500" font-size="12" fill="#bbb" textLength="44">Layout1</text><path d="M142 1016v8M138 1020h8" stroke="#ccc" stroke-width="2"/></svg>
 <svg class="w-[571px] h-7" viewBox="1349 1012 571 28"><rect x="1349" y="1012" width="571" height="27" fill="#666"/>
  <g fill="#515151" stroke="#868686"><path d="M1350.500 1012.500h28v25h-28zM1380.500 1012.500h64v25h-64zM1446.500 1012.500h103v25h-103zM1549.500 1012.500h64v25h-64zM1615.500 1012.500h106v25h-106zM1723.500 1012.500h40v25h-40zM1763.500 1012.500h25v25h-25zM1790.500 1012.500h25v25h-25zM1817.500 1012.500h25v25h-25zM1844.500 1012.500h23v25h-23zM1869.500 1012.500h49v25h-49z"/></g>
  <text x="1354" y="1029" font-size="12" fill="#fff">模型</text>
  <g stroke="#c8c8c8" fill="none"><path d="M1387.500 1018v13M1390.500 1018v13M1393.500 1018v13M1396.500 1018v13M1386 1020.500h14M1386 1023.500h14M1386 1026.500h14M1386 1029.500h14"/><path d="M1410 1018.500h15M1410 1021.500h15M1410 1024.500h15M1410 1027.500h15M1410 1030.500h15" stroke-dasharray="1 2"/>
  <path stroke-width="1.400" d="M1453.500 1019v12H1461M1454 1027.500h3.500v3M1489 1020a6.500 6.500 0 101 6M1483 1024.500h8M1483 1024l4-5M1514 1016l15 17M1522.500 1016v17M1554 1031h16M1555 1030l12-10M1582 1019.500h11v11.500h-13v-9M1776 1018v14M1769 1025h14M1796 1018h5v8h-5zM1798 1031l3-5 3 5zM1875 1019h14v12h-14z"/><circle cx="1561" cy="1025" r="1" fill="#c8c8c8"/><circle cx="1806.500" cy="1023" r="3"/><path stroke-width="2" d="M1900 1019h15M1900 1025h15M1900 1031h15"/><path d="M1878 1028l3-3M1883 1024l3-3M1878 1025v3h3M1886 1024v-3h-3" stroke-width="1.500"/></g>
  <path fill="#0d0" stroke="#000" d="M1579.500 1017.500h4v4h-4z"/>
  <path fill="#fff" d="M1433 1023h7l-3.500 4zM1499 1023h7l-3.500 4zM1538 1023h7l-3.500 4zM1602 1023h7l-3.500 4zM1710 1023h7l-3.500 4zM1752 1023h7l-3.500 4z"/>
  <g><path d="M1626 1017h3l2 9q3 2 6 6l-9-4-8 4q4-3 5-8z" fill="#1f8fff" stroke="#1f8fff"/><circle cx="1632" cy="1020" r="3" fill="none" stroke="#49a8ff" stroke-width="1.500"/><path d="M1651 1017h2l2 9q2 2 5 6l-8-4-8 4q4-3 5-8z" fill="#c4c4c4"/><path d="M1659 1017l-4 5h4l-4 5" fill="none" stroke="#c4c4c4" stroke-width="1.500"/><path d="M1675 1017h2l2 9q2 2 5 6l-8-4-8 4q4-3 5-8z" fill="#c4c4c4"/></g>
  <text x="1693" y="1029" font-size="12" font-weight="500" fill="#fff" textLength="13">1:1</text>
  <circle cx="1736" cy="1025" r="4" fill="none" stroke="#ccc" stroke-width="3"/><circle cx="1736" cy="1025" r="6" fill="none" stroke="#ccc" stroke-width="1.500" stroke-dasharray="2.600 2.500"/>
  <circle cx="1830" cy="1025" r="8" fill="#0b4f96" stroke="#1c86ee" stroke-width="2"/><path d="M1829 1027l5-5" stroke="#7ac0ff"/>
  <path d="M1849.500 1018.500h6v6h-6zM1857 1018l5 3v8h-5z" fill="#cfe3ff" stroke="#25518f"/><path d="M1850 1025h9v7h-9z" fill="#ffe25a"/><path d="M1855 1028l3 4 6-8" fill="none" stroke="#2fb80f" stroke-width="2.500"/>
 </svg>
</footer>

<!-- taskbar -->
<div class="h-10 shrink-0 bg-[#1c1b19] flex text-white">
 <div class="w-12 bg-[#111110] flex items-center justify-center"><svg class="w-[17px] h-4" viewBox="0 0 17 16" fill="#fff"><path d="M0 2.500l7-1V7.500H0zM8 1.300L17 0v7.500H8zM0 8.500h7v6l-7-1zM8 8.500h9V16l-9-1.300z"/></svg></div>
 <div class="w-[344px] bg-[#333] flex items-center pl-[9px] text-[15px] text-[#a3a3a3] tracking-[-.25px]">搜索 Web 和 Windows</div>
 <svg class="w-[300px] h-10" viewBox="392 1040 300 40"><rect x="589" y="1040" width="48" height="40" fill="#494847"/>
  <path d="M411.500 1054.500h9v12h-9zM409 1055.500h-2.500v10h2.500M423 1055.500h2.500v10H423" fill="none" stroke="#fff" stroke-width="1.400"/>
  <circle cx="466" cy="1060" r="11" fill="#dd4b3e"/><path d="M466 1060L456.500 1054.500A11 11 0 00465 1071z" fill="#1da462"/><path d="M466 1060h11a11 11 0 01-12 11l5-8 1.500-8h4.500" fill="#ffcd46"/><circle cx="466" cy="1060" r="5" fill="#fff"/><circle cx="466" cy="1060" r="4" fill="#4587f4"/>
  <path d="M504 1051l16-3 6 2v20l-6 2-16-1z" fill="#68217a"/><path d="M506 1055l4 3 9-8 5 2v16l-5 2-9-8-4 3v-2l3-4-3-3z" fill="#fff"/><path d="M520 1056v8l-5-4z" fill="#68217a"/>
  <rect x="552" y="1048" width="24" height="24" fill="#bdbdc4"/><path d="M553 1072q-1-8 3-12l5-3h6l4 3q4 4 3 12z" fill="#25211f"/><circle cx="564" cy="1053" r="3.500" fill="#c99b80"/><path d="M560 1053q0-5 4-5t4 5l-2-2h-4z" fill="#3b2417"/><path d="M562 1057h4l-2 9z" fill="#eee"/><circle cx="559" cy="1067" r="2" fill="#d6ab90"/><circle cx="570" cy="1067" r="2" fill="#d6ab90"/>
  <defs><linearGradient id="ac" x1="0" y1="0" x2="0" y2="1"><stop offset="0" stop-color="#fbe3e3"/><stop offset=".45" stop-color="#f0a0a0"/><stop offset="1" stop-color="#e04a50"/></linearGradient></defs>
  <rect x="601" y="1048" width="24" height="24" fill="url(#ac)"/><path d="M611 1051h4l6 16h-4l-3-4h-2l-3 4h-4z" fill="#b0141a"/><path d="M613 1051h2l6 16h-4l-3-4z" fill="#8a0d12"/>
  <path d="M651 1051h8l2 2h11v16h-21z" fill="#ffe08a"/><path d="M651 1055h21v13h-21z" fill="#fcd566"/><path d="M655 1069v-7q0-2 2-2h10q2 0 2 2v7h-4v-5h-6v5z" fill="#2fb3f5"/>
  <path d="M446 1077h40v3h-40zM495 1077h40v3h-40zM544 1077h40v3h-40zM589 1077h48v3h-48zM642 1077h40v3h-40z" fill="#76b9ed"/>
 </svg>
 <div class="flex-1"></div>
 <svg class="w-[300px] h-10" viewBox="1620 1040 300 40"><path d="M1621 1063l5-5 5 5" fill="none" stroke="#fff" stroke-width="1.400"/>
  <g id="qq"><path d="M1645.500 1057q0-5 4.500-5t4.500 5q3 4 2 8h-1l-2 2h-7l-2-2h-1q-1-4 2-8z" fill="#1a1a1a"/><path d="M1646.500 1061h7q1 3-1 5.500h-5q-2-2-1-5.500z" fill="#fff"/><circle cx="1648.500" cy="1055" r="1.200" fill="#fff"/><circle cx="1651.500" cy="1055" r="1.200" fill="#fff"/><path d="M1647.500 1056.500h5l-2.500 1.500z" fill="#f6a81c"/><path d="M1645 1058.500q5 2 10 0v2.500q-5 1.500-8 .5v3h-2z" fill="#e22"/><path d="M1644 1066.500h5v1.500h-5zM1651 1066.500h5v1.500h-5z" fill="#f6a81c"/></g>
  <use href="#qq" x="23"/><circle cx="1655" cy="1063.500" r="3.800" fill="#f6b04a"/><path d="M1652.500 1062.500h5M1652.500 1065h5" stroke="#844"/>
  <path d="M1691 1067v-7l3-3 2-3h4l2 3 3 3v7h-3v-5h-1.500v5h-4.500v-5h-1.500v5z" fill="#fff"/>
  <path d="M1717 1055.500h12v8h-12M1723 1064v3M1719 1067.500h8M1714.500 1054.500h4v3h-4zM1716.500 1058v10" fill="none" stroke="#fff" stroke-width="1.300"/>
  <path d="M1738.500 1058v5h3l4 4v-13l-4 4zM1748 1057q2 3 0 7" fill="none" stroke="#fff"/><path d="M1750 1055q4 5 0 11M1752 1053q5 7 0 14" fill="none" stroke="#888"/>
  <path d="M1762 1053h16v12h-5l-3 4v-4h-8z" fill="#fff"/><path d="M1765 1056.500h10M1765 1059h10M1765 1061.500h6" stroke="#222"/>
  <text x="1787" y="1065" font-size="13" fill="#fff">中</text>
  <rect x="1815" y="1053" width="14" height="14" fill="#fff"/><path d="M1817.500 1065v-10l4.500 7 4.500-7v10" fill="none" stroke="#000" stroke-width="1.600"/>
  <g fill="#fff" font-size="12"><text x="1862" y="1055" textLength="31">14:13</text><text x="1848" y="1072" textLength="59">2016/6/24</text></g><path d="M1915.500 1040v40" stroke="#555"/></svg>
</div>

<script>
const rows = [
 [17,'UI设置'],[19,'热源显示大小','0.009',1],[19,'公式计算'],
 [20,'热源总负荷(kW)','534.41'],[20,'建筑总面积(m^2)','11000'],[20,'水泵功率(kW)','3.21'],[21,'主管道长度(m)','1922.75'],
 [20,'水泵全年运行能耗(kW...','6918.1'],[20,'管道总长度(m)','4742.9'],[20,'水泵流量(m3)','20.22'],[21,'水泵扬程(m)','30.6'],[19,'水泵台数(台)','1'],
 [18,'用户输入'],[21,'锅炉配选(台)','0.8×700KW，锅炉名称：铸铁热水锅炉，台数：1，价',2],[24,'供暖方式','地板供暖',2],
 [20,'水泵供回水温差(℃)','25'],[20,'水泵供水温度','75',1],[20,'水泵回水温度','50',1],[21,'燃气锅炉效率(百分比)','90',1]
];
const wide = s => s.replace(/[，：]/g, c => `<span class="font-['Noto_Sans_CJK_TC']">${c}</span>`);
document.getElementById('grid').innerHTML = rows.map((r, i) => {
 if (r.length === 2) return `<div class="flex items-center bg-[#f0f0f0] font-bold pt-px" style="height:${r[0]}px"><svg class="w-[21px] h-[6px] -mt-[2px]" viewBox="0 0 21 6"><path d="M12 0v6H6z" fill="#000"/></svg>${r[1]}</div>`;
 const label = i === 13 ? 'w-[149px] pl-[17px] pt-px flex items-center bg-[#c3e4f5]' : 'w-[149px] pl-[17px] pt-px flex items-center';
 const val = r[3] === 2
  ? `<div class="flex-1 border border-[#acacac] bg-linear-to-b from-[#f0f0f0] to-[#e4e4e4] ml-px flex items-center justify-between pl-[5px] pr-[5px] pt-px"><span class="tracking-[.1px]">${wide(r[2])}</span><svg class="w-[7px] h-[5px] -mt-[2px]" viewBox="0 0 7 5"><path d="M1 1l2.500 2.500L6 1" fill="none" stroke="#555"/></svg></div>`
  : `<div class="${r[3] ? 'flex-1 pl-1 pt-px flex items-center' : 'flex-1 pl-[5px] pt-px flex items-center text-[#838383]'}">${r[2]}</div>`;
 return `<div class="flex pl-[10px] bg-[#f0f0f0]" style="height:${r[0]}px"><div class="flex flex-1 bg-white border-b border-[#f0f0f0]"><div class="${label}">${r[1]}</div><div class="w-px bg-[#f0f0f0]"></div>${val}</div></div>`;
}).join('');
</script>
</body>
</html>
